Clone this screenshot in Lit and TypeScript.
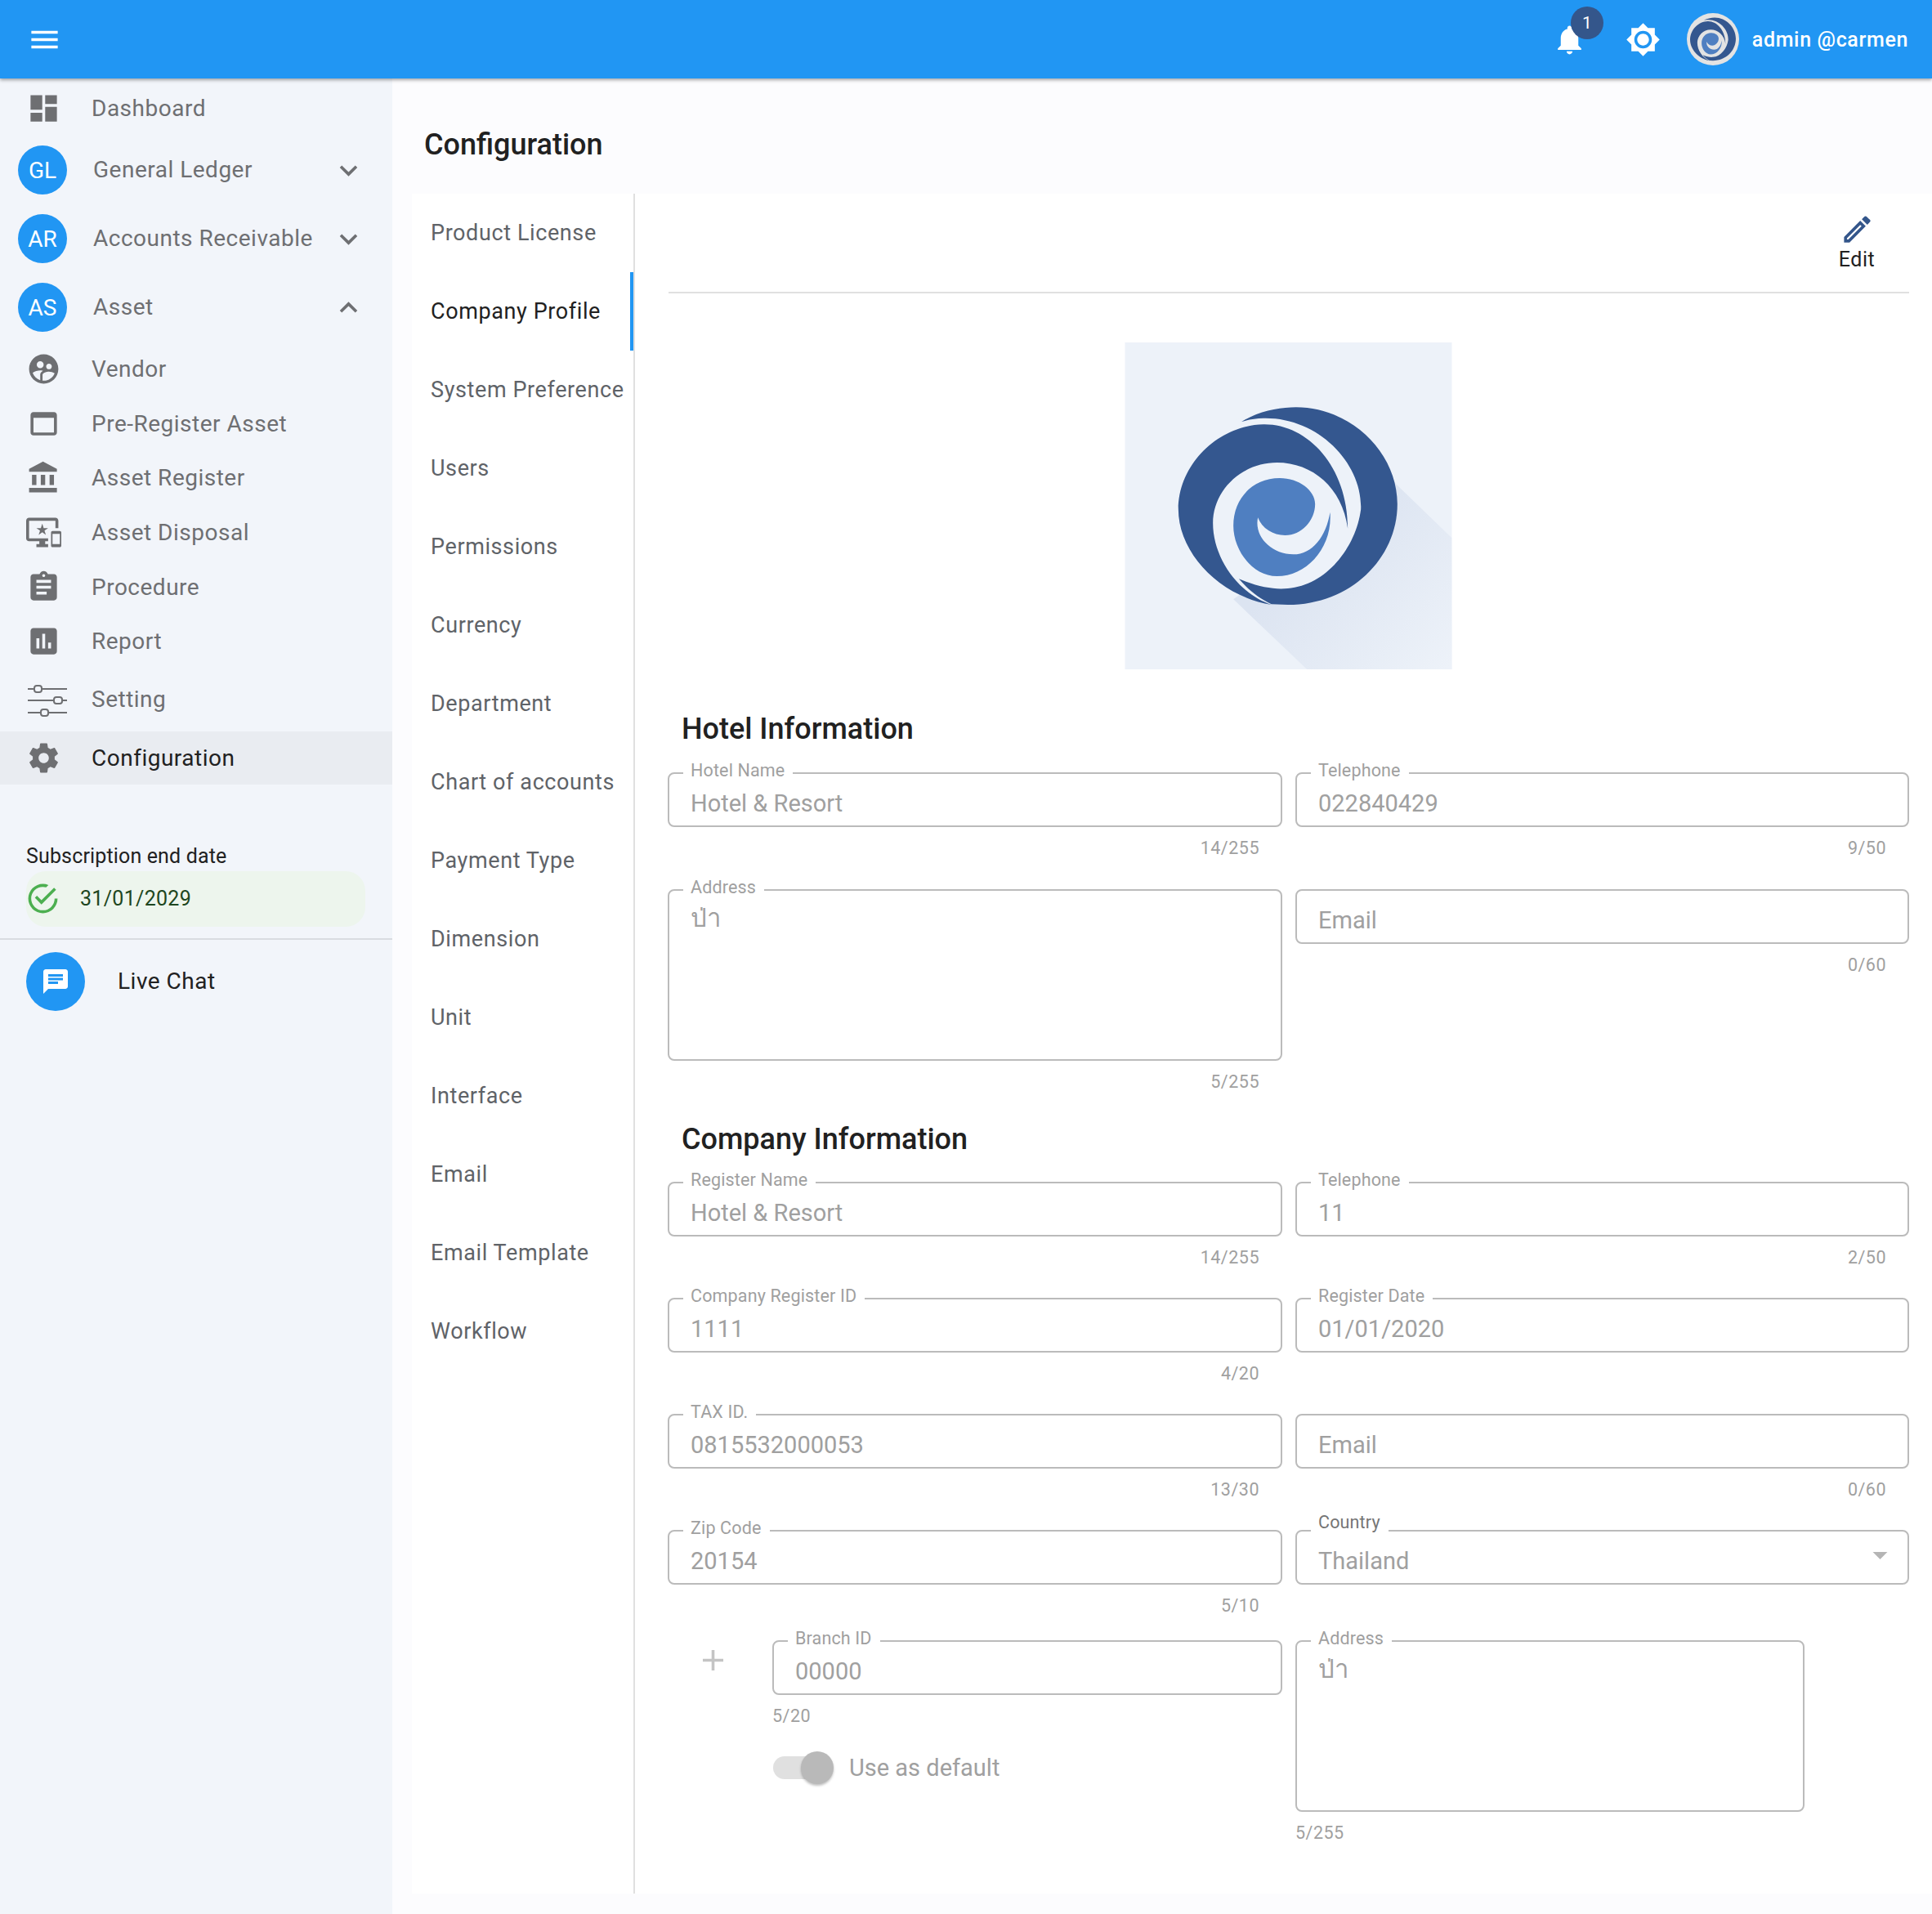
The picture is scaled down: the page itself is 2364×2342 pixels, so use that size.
import { LitElement, html, css, svg } from "lit";
import { customElement } from "lit/decorators.js";

const P: Record<string, string> = {
  menu: "M3 18h18v-2H3v2zm0-5h18v-2H3v2zm0-7v2h18V6H3z",
  dash: "M3 13h8V3H3v10zm0 8h8v-6H3v6zm10 0h8V11h-8v10zm0-18v6h8V3h-8z",
  vendor: "M11.99 2c-5.52 0-10 4.48-10 10s4.48 10 10 10 10-4.48 10-10-4.48-10-10-10zm3.61 6.34c1.07 0 1.93.86 1.93 1.93 0 1.07-.86 1.93-1.93 1.93-1.07 0-1.93-.86-1.93-1.93-.01-1.07.86-1.93 1.93-1.93zm-6-1.58c1.3 0 2.36 1.06 2.36 2.36 0 1.3-1.06 2.36-2.36 2.36s-2.36-1.06-2.36-2.36c0-1.31 1.05-2.36 2.36-2.36zm0 9.13v3.75c-2.4-.75-4.3-2.6-5.14-4.96 1.05-1.12 3.67-1.69 5.14-1.69.53 0 1.2.08 1.9.22-1.64.87-1.9 2.02-1.9 2.68zM11.99 20c-.27 0-.53-.01-.79-.04v-4.07c0-1.42 2.94-2.13 4.4-2.13 1.07 0 2.92.39 3.84 1.15-1.17 2.97-4.06 5.09-7.45 5.09z",
  web: "M19 4H5c-1.11 0-2 .9-2 2v12c0 1.1.89 2 2 2h14c1.1 0 2-.9 2-2V6c0-1.1-.89-2-2-2zm0 14H5V8h14v10z",
  bank: "M4 10v7h3v-7H4zm6 0v7h3v-7h-3zM2 22h19v-3H2v3zm14-12v7h3v-7h-3zm-4.5-9L2 6v2h19V6l-9.5-5z",
  devices: "M23 11.01L18 11c-.55 0-1 .45-1 1v9c0 .55.45 1 1 1h5c.55 0 1-.45 1-1v-9c0-.55-.45-.99-1-.99zM23 20h-5v-7h5v7zM20 2H2C.89 2 0 2.89 0 4v12c0 1.1.89 2 2 2h7v2H7v2h8v-2h-2v-2h2v-2H2V4h18v5h2V4c0-1.11-.9-2-2-2zm-8.03 7L11 6l-.97 3H7l2.47 1.76-.94 2.91 2.47-1.8 2.47 1.8-.94-2.91L15 9h-3.03z",
  assign: "M19 3h-4.18C14.4 1.84 13.3 1 12 1c-1.3 0-2.4.84-2.82 2H5c-1.1 0-2 .9-2 2v14c0 1.1.9 2 2 2h14c1.1 0 2-.9 2-2V5c0-1.1-.9-2-2-2zm-7 0c.55 0 1 .45 1 1s-.45 1-1 1-1-.45-1-1 .45-1 1-1zm2 14H7v-2h7v2zm3-4H7v-2h10v2zm0-4H7V7h10v2z",
  report: "M19 3H5c-1.1 0-2 .9-2 2v14c0 1.1.9 2 2 2h14c1.1 0 2-.9 2-2V5c0-1.1-.9-2-2-2zM9 17H7v-7h2v7zm4 0h-2V7h2v10zm4 0h-2v-4h2v4z",
  gear: "M19.43 12.98c.04-.32.07-.64.07-.98s-.03-.66-.07-.98l2.11-1.65c.19-.15.24-.42.12-.64l-2-3.46c-.12-.22-.39-.3-.61-.22l-2.49 1c-.52-.4-1.08-.73-1.69-.98l-.38-2.65C14.46 2.18 14.25 2 14 2h-4c-.25 0-.46.18-.49.42l-.38 2.65c-.61.25-1.17.59-1.69.98l-2.49-1c-.23-.09-.49 0-.61.22l-2 3.46c-.13.22-.07.49.12.64l2.11 1.65c-.04.32-.07.65-.07.98s.03.66.07.98l-2.11 1.65c-.19.15-.24.42-.12.64l2 3.46c.12.22.39.3.61.22l2.49-1c.52.4 1.08.73 1.69.98l.38 2.65c.03.24.24.42.49.42h4c.25 0 .46-.18.49-.42l.38-2.65c.61-.25 1.17-.59 1.69-.98l2.49 1c.23.09.49 0 .61-.22l2-3.46c.12-.22.07-.49-.12-.64l-2.11-1.65zM12 15.5c-1.93 0-3.5-1.57-3.5-3.5s1.57-3.5 3.5-3.5 3.5 1.57 3.5 3.5-1.57 3.5-3.5 3.5z",
  down: "M16.59 8.59L12 13.17 7.41 8.59 6 10l6 6 6-6z",
  up: "M12 8l-6 6 1.41 1.41L12 10.83l4.59 4.58L18 14z",
  bell: "M12 22c1.1 0 2-.9 2-2h-4c0 1.1.89 2 2 2zm6-6v-5c0-3.07-1.64-5.64-4.5-6.32V4c0-.83-.67-1.5-1.5-1.5s-1.5.67-1.5 1.5v.68C7.63 5.36 6 7.92 6 11v5l-2 2v1h16v-1l-2-2z",
  bright: "M20 8.69V4h-4.69L12 .69 8.69 4H4v4.69L.69 12 4 15.31V20h4.69L12 23.31 15.31 20H20v-4.69L23.31 12 20 8.69zM12 18c-3.31 0-6-2.69-6-6s2.69-6 6-6 6 2.69 6 6-2.69 6-6 6zm0-10c-2.21 0-4 1.79-4 4s1.79 4 4 4 4-1.79 4-4-1.79-4-4-4z",
  edit: "M14.06 9.02l.92.92L5.92 19H5v-.92l9.06-9.06M17.66 3c-.25 0-.51.1-.7.29l-1.83 1.83 3.75 3.75 1.83-1.83c.39-.39.39-1.02 0-1.41l-2.34-2.34c-.2-.2-.45-.29-.71-.29zm-3.6 3.19L3 17.25V21h3.75L17.81 9.94l-3.75-3.75z",
  ok: "M20,12A8,8 0 0,1 12,20A8,8 0 0,1 4,12A8,8 0 0,1 12,4C12.76,4 13.5,4.11 14.2,4.31L15.77,2.74C14.61,2.26 13.34,2 12,2A10,10 0 0,0 2,12A10,10 0 0,0 12,22A10,10 0 0,0 22,12M7.91,10.08L6.5,11.5L11,16L21,6L19.59,4.58L11,13.17L7.91,10.08Z",
  chat: "M20 2H4c-1.1 0-1.99.9-1.99 2L2 22l4-4h14c1.1 0 2-.9 2-2V4c0-1.1-.9-2-2-2zM6 9h12v2H6V9zm8 5H6v-2h8v2zm4-6H6V6h12v2z",
  drop: "M7 10l5 5 5-5z",
  plus: "M19 13h-6v6h-2v-6H5v-2h6V5h2v6h6v2z",
};

const icon = (k: string, cls = "") => html`<svg class="ic ${cls}" viewBox="0 0 24 24"><path d=${P[k]}></path></svg>`;

const logoShapes = (light: string) => svg`
  <ellipse cx="650" cy="627" rx="400" ry="360" fill=${light}></ellipse>
  <path fill="#34578f" d="M590 990C400 960 248 800 248 640C248 470 400 330 560 328C720 325 870 480 870 710C850 560 740 468 610 468C480 468 375 570 375 690C375 820 470 950 590 990Z"></path>
  <path fill="#34578f" d="M480 318C540 280 620 265 680 265C880 265 1052 430 1052 620C1052 820 880 990 650 990L590 988C540 965 500 930 470 895C540 925 600 935 650 930C790 920 900 780 918 640C925 470 760 300 560 305C530 305 500 312 480 318Z"></path>
  <path fill="#4f7fc1" d="M805 650C815 780 720 885 610 885C520 885 450 790 450 700C450 600 520 525 620 525C690 525 750 570 750 620C750 680 700 735 640 735C595 735 555 710 540 670C525 740 590 805 670 805C740 805 790 740 805 650Z"></path>
`;

const NAV_TOP = [
  { t: "Vendor", i: "vendor" },
  { t: "Pre-Register Asset", i: "web" },
  { t: "Asset Register", i: "bank" },
  { t: "Asset Disposal", i: "devices" },
  { t: "Procedure", i: "assign" },
  { t: "Report", i: "report" },
];
const TABS = ["Product License", "Company Profile", "System Preference", "Users", "Permissions", "Currency", "Department", "Chart of accounts", "Payment Type", "Dimension", "Unit", "Interface", "Email", "Email Template", "Workflow"];

@customElement("app-root")
export class AppRoot extends LitElement {
  static styles = css`
    :host { display: block; width: 2364px; height: 2342px; background: #fcfcfe; font-family: Roboto, "Noto Sans", "DejaVu Sans", sans-serif; overflow: hidden; }
    * { box-sizing: border-box; }
    .ic { width: 43px; height: 43px; fill: currentColor; display: block; flex: none; }
    header { height: 96px; background: #2196f3; box-shadow: 0 2px 4px rgba(0,0,0,.35); display: flex; align-items: center; color: #fff; position: relative; z-index: 2; padding: 0 29px 0 33px; }
    .spacer { flex: 1; }
    .bellwrap { position: relative; width: 43px; height: 43px; margin-right: 47px; }
    .badge { position: absolute; left: 23px; top: -19px; width: 40px; height: 40px; border-radius: 50%; background: #34568b; display: flex; align-items: center; justify-content: center; font-size: 21px; }
    .avatar { width: 64px; height: 64px; border-radius: 50%; overflow: hidden; background: #e3e3e3; margin-left: 32px; display: block; }
    .user { font-size: 25px; font-weight: 500; letter-spacing: .65px; margin-left: 16px; }
    .body { display: flex; height: 2246px; }
    aside { width: 480px; flex: none; background: #f2f5fa; color: #6e6f72; }
    .row { display: flex; align-items: center; height: 66.7px; font-size: 28px; letter-spacing: .5px; }
    .row .ic { margin-left: 32px; margin-right: 37px; }
    .row.dash { height: 70px; padding-top: 2px; }
    .row.set { height: 76.8px; }
    .row.active { background: #e9ecf1; color: #212121; height: 65.5px; }
    .row.active .ic { color: #6e6f72; }
    .group { display: flex; align-items: center; height: 84px; font-size: 28px; letter-spacing: .5px; padding-left: 22px; }
    .av { width: 60px; height: 60px; border-radius: 50%; background: #2196f3; color: #fff; display: flex; align-items: center; justify-content: center; letter-spacing: 0; margin-right: 32px; font-size: 28px; }
    .group span.gt { flex: 1; padding-bottom: 2px; }
    .group .ic { margin-right: 32px; }
    .sliders { width: 48px; height: 36px; margin-left: 34px; margin-right: 30px; stroke: #6e6f72; stroke-width: 2; fill: #f2f5fa; flex: none; display: block; overflow: visible; }
    .row.set span { padding-bottom: 2px; }
    .sub { font-size: 25px; color: #212121; padding: 0 0 0 32px; margin-top: 71px; height: 34px; line-height: 34px; letter-spacing: .15px; }
    .pill { margin: .5px 33px 0 32px; height: 68px; border-radius: 24px; background: #edf5ed; display: flex; align-items: center; color: #1e4620; font-size: 25px; letter-spacing: .3px; }
    .pill .ic { color: #4caf50; margin-right: 24px; margin-left: -1px; }
    .divider { height: 2px; background: #d9dce1; margin-top: 14px; }
    .chat { display: flex; align-items: center; padding: 15px 0 0 32px; font-size: 28px; color: #212121; letter-spacing: .5px; }
    .chatbtn { width: 72px; height: 72px; border-radius: 50%; background: #2196f3; color: #fff; display: flex; align-items: center; justify-content: center; margin-right: 40px; }
    .chatbtn .ic { width: 36px; height: 36px; }
    main { flex: 1; padding-left: 24px; min-width: 0; }
    .title { font-size: 36px; font-weight: 500; color: #212121; margin: 0; height: 141px; padding: 61px 0 0 15px; line-height: 40px; }
    .card { background: #fff; height: 2080px; display: flex; }
    .tabs { width: 273px; flex: none; border-right: 2px solid #e0e0e0; }
    .tab { height: 96px; display: flex; align-items: center; padding-left: 23px; font-size: 27px; letter-spacing: .6px; color: #5f6368; white-space: nowrap; }
    .tab.on { color: #212121; border-right: 4px solid #2196f3; }
    .content { flex: 1; padding: 0 28px 0 40px; min-width: 0; }
    .toolbar { height: 122px; border-bottom: 2px solid #e0e0e0; margin-left: 1px; display: flex; justify-content: flex-end; padding-right: 38px; }
    .editb { width: 52px; display: flex; flex-direction: column; align-items: center; color: #212121; font-size: 25px; padding-top: 22px; letter-spacing: .5px; }
    .editb .ic { color: #34568b; }
    .editb span { margin-top: 1px; }
    .logo { display: block; width: 400px; height: 400px; margin: 60px auto 0; background: #edf2f9; transform: translateX(-.5px); }
    h2 { font-size: 36px; font-weight: 500; color: #212121; margin: 0 0 32px 17px; line-height: 40px; }
    h2.first { margin-top: 53px; margin-bottom: 33px; }
    .grid { display: grid; grid-template-columns: 752px 751px; column-gap: 16px; }
    .cell { height: 142px; }
    .cell.tall { height: 286px; }
    .cell.first { height: 143px; }
    .cell.last { height: 135px; }
    .box { position: relative; height: 67px; border: 2px solid #bbb; border-radius: 8px; padding: 0 26px; color: #a0a0a0; font-size: 29px; display: flex; align-items: center; padding-top: 9px; }
    .box.tallbox { height: 210px; align-items: flex-start; padding-top: 17px; }
    .thai { font-size: 31px; line-height: 34px; }
    .lab { position: absolute; left: 17px; top: -17px; background: #fff; padding: 0 10px 0 9px; font-size: 21.5px; line-height: 26px; letter-spacing: .15px; color: #a0a0a0; }
    .lab.dark { color: #757575; top: -24px; }
    .count { font-size: 21.5px; color: #a0a0a0; letter-spacing: .5px; text-align: right; padding-right: 28px; margin-top: 14px; line-height: 24px; }
    .count.left { text-align: left; padding: 0; }
    .drop { position: absolute; right: 12px; top: 7px; color: #b5b5b5; }
    .branch { display: flex; }
    .pluscol { width: 128px; flex: none; color: #c4c4c4; padding: 3px 0 0 34px; }
    .branchmain { flex: 1; min-width: 0; }
    .switchrow { display: flex; align-items: center; margin-top: 34px; color: #a0a0a0; font-size: 29px; }
    .track { width: 54px; height: 28px; border-radius: 14px; background: #e0e0e0; position: relative; margin-left: 1px; margin-right: 39px; }
    .thumb { position: absolute; left: 34px; top: -6px; width: 40px; height: 40px; border-radius: 50%; background: #b9b9b9; box-shadow: 0 2px 3px rgba(0,0,0,.25); }
    .addr { width: 623px; }
  `;

  field(label: string, value: string, count: string, tall = false, dark = false) {
    return html`<div class="box ${tall ? "tallbox" : ""}">
        ${label ? html`<span class="lab ${dark ? "dark" : ""}">${label}</span>` : ""}
        <span class=${tall ? "thai" : ""}>${value}</span>
        ${dark ? html`<span class="drop">${icon("drop")}</span>` : ""}
      </div>
      ${count ? html`<div class="count">${count}</div>` : ""}`;
  }

  render() {
    return html`
      <header>
        ${icon("menu")}
        <span class="spacer"></span>
        <div class="bellwrap">${icon("bell")}<span class="badge">1</span></div>
        ${icon("bright")}
        <svg class="avatar" viewBox="190 190 920 880" preserveAspectRatio="none">${logoShapes("#e3e3e3")}</svg>
        <span class="user">admin @carmen</span>
      </header>
      <div class="body">
        <aside>
          <div class="row dash">${icon("dash")}<span>Dashboard</span></div>
          <div class="group"><span class="av">GL</span><span class="gt">General Ledger</span>${icon("down")}</div>
          <div class="group"><span class="av">AR</span><span class="gt">Accounts Receivable</span>${icon("down")}</div>
          <div class="group"><span class="av">AS</span><span class="gt">Asset</span>${icon("up")}</div>
          ${NAV_TOP.map((n) => html`<div class="row">${icon(n.i)}<span>${n.t}</span></div>`)}
          <div class="row set">
            <svg class="sliders" viewBox="0 0 48 36">
              <path d="M0 4h48M0 18h48M0 33h48"></path>
              <rect x="8" y="0" width="9" height="8" rx="3"></rect>
              <rect x="32" y="14" width="10" height="8" rx="3"></rect>
              <rect x="16" y="29" width="9" height="8" rx="3"></rect>
            </svg>
            <span>Setting</span>
          </div>
          <div class="row active">${icon("gear")}<span>Configuration</span></div>
          <div class="sub">Subscription end date</div>
          <div class="pill">${icon("ok")}<span>31/01/2029</span></div>
          <div class="divider"></div>
          <div class="chat"><span class="chatbtn">${icon("chat")}</span><span>Live Chat</span></div>
        </aside>
        <main>
          <h1 class="title">Configuration</h1>
          <div class="card">
            <div class="tabs">
              ${TABS.map((t) => html`<div class="tab ${t === "Company Profile" ? "on" : ""}">${t}</div>`)}
            </div>
            <div class="content">
              <div class="toolbar"><div class="editb">${icon("edit")}<span>Edit</span></div></div>
              <svg class="logo" viewBox="52 27 1200 1200">
                <defs>
                  <linearGradient id="sh" gradientUnits="userSpaceOnUse" x1="760" y1="760" x2="1230" y2="1230">
                    <stop offset="0" stop-color="#dce4f1"></stop>
                    <stop offset="1" stop-color="#edf2f9"></stop>
                  </linearGradient>
                </defs>
                <path fill="url(#sh)" d="M1040 540L1252 745V1227H720L450 970Z"></path>
                ${logoShapes("#edf2f9")}
              </svg>
              <h2 class="first">Hotel Information</h2>
              <div class="grid">
                <div class="cell first">${this.field("Hotel Name", "Hotel & Resort", "14/255")}</div>
                <div class="cell first">${this.field("Telephone", "022840429", "9/50")}</div>
                <div class="cell tall">${this.field("Address", "ป่า", "5/255", true)}</div>
                <div class="cell tall">${this.field("", "Email", "0/60")}</div>
              </div>
              <h2>Company Information</h2>
              <div class="grid">
                <div class="cell">${this.field("Register Name", "Hotel & Resort", "14/255")}</div>
                <div class="cell">${this.field("Telephone", "11", "2/50")}</div>
                <div class="cell">${this.field("Company Register ID", "1111", "4/20")}</div>
                <div class="cell">${this.field("Register Date", "01/01/2020", "")}</div>
                <div class="cell">${this.field("TAX ID.", "0815532000053", "13/30")}</div>
                <div class="cell">${this.field("", "Email", "0/60")}</div>
                <div class="cell last">${this.field("Zip Code", "20154", "5/10")}</div>
                <div class="cell last">${this.field("Country", "Thailand", "", false, true)}</div>
                <div class="branch">
                  <div class="pluscol">${icon("plus")}</div>
                  <div class="branchmain">
                    <div class="box"><span class="lab">Branch ID</span><span>00000</span></div>
                    <div class="count left">5/20</div>
                    <div class="switchrow"><span class="track"><span class="thumb"></span></span><span>Use as default</span></div>
                  </div>
                </div>
                <div class="addr">
                  <div class="box tallbox"><span class="lab">Address</span><span class="thai">ป่า</span></div>
                  <div class="count left">5/255</div>
                </div>
              </div>
            </div>
          </div>
        </main>
      </div>
    `;
  }
}
